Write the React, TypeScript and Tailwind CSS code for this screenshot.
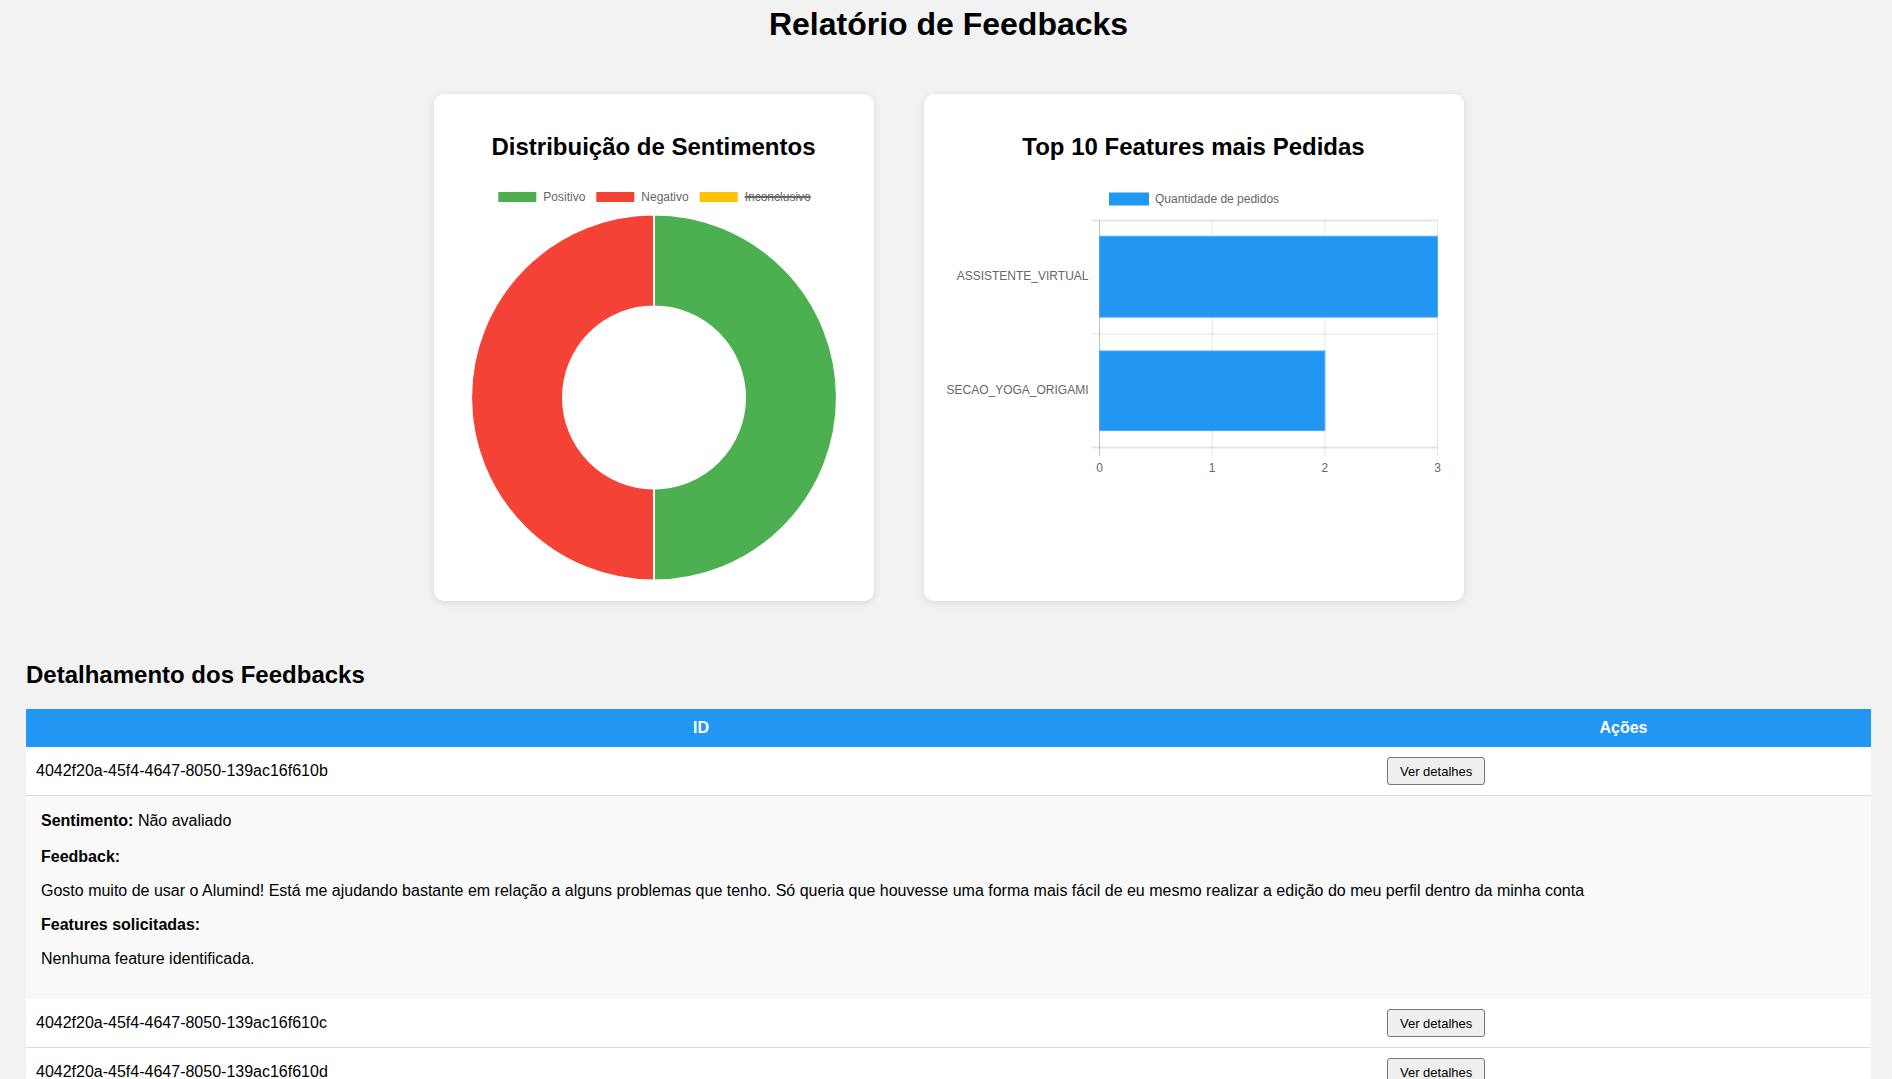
import React from "react";

const FONT = "Liberation Sans, Arial, Helvetica, sans-serif";

function DonutChart() {
  const cx = 200;
  const cy = 216.5;
  const R = 183;
  const r = 91;
  const green = `M ${cx} ${cy - R} A ${R} ${R} 0 0 1 ${cx} ${cy + R} L ${cx} ${cy + r} A ${r} ${r} 0 0 0 ${cx} ${cy - r} Z`;
  const red = `M ${cx} ${cy + R} A ${R} ${R} 0 0 1 ${cx} ${cy - R} L ${cx} ${cy - r} A ${r} ${r} 0 0 0 ${cx} ${cy + r} Z`;
  const items = [
    { x: 43.3, color: "#4CAF50", label: "Positivo", w: 42, strike: false },
    { x: 141.3, color: "#F44336", label: "Negativo", w: 47.4, strike: false },
    { x: 244.7, color: "#FFC107", label: "Inconclusivo", w: 66, strike: true },
  ];
  return (
    <svg width="400" height="400" viewBox="0 0 400 400" className="block">
      {items.map((it) => (
        <g key={it.label}>
          <rect x={it.x} y={10} width={40} height={12} fill={it.color} stroke="#fff" strokeWidth={2} />
          <text x={it.x + 46} y={20.3} fontSize={12} fill="#666" fontFamily={FONT}>
            {it.label}
          </text>
          {it.strike && (
            <line x1={it.x + 46} x2={it.x + 46 + it.w} y1={16} y2={16} stroke="#666" strokeWidth={2} />
          )}
        </g>
      ))}
      <path d={green} fill="#4CAF50" stroke="#fff" strokeWidth={2} />
      <path d={red} fill="#F44336" stroke="#fff" strokeWidth={2} />
    </svg>
  );
}

function BarChart() {
  const x0 = 155.5;
  const step = 112.67;
  const xs = [0, 1, 2, 3].map((v) => x0 + v * step);
  const top = 39.6;
  const bottom = 266.4;
  const mid = (top + bottom) / 2;
  const grid = "rgba(0,0,0,0.1)";
  return (
    <svg width="500" height="300" viewBox="0 0 500 300" className="block">
      <rect x={165} y={11.5} width={40} height={13} fill="#2196F3" />
      <text x={211} y={22.3} fontSize={12} fill="#666" fontFamily={FONT}>
        Quantidade de pedidos
      </text>
      {xs.map((x, i) => (
        <line
          key={i}
          x1={x}
          x2={x}
          y1={top}
          y2={bottom + 8}
          stroke={i === 0 ? "rgba(0,0,0,0.25)" : grid}
          strokeWidth={1}
        />
      ))}
      {[top, mid, bottom].map((y, i) => (
        <line key={i} x1={x0 - 8} x2={xs[3]} y1={y} y2={y} stroke={grid} strokeWidth={i === 1 ? 1 : 2} />
      ))}
      <rect x={x0} y={55.3} width={xs[3] - x0} height={80.8} fill="#2196F3" stroke="#4aa8f5" strokeWidth={1} />
      <rect x={x0} y={170} width={xs[2] - x0} height={79.6} fill="#2196F3" stroke="#4aa8f5" strokeWidth={1} />
      <text x={144.5} y={99.3} fontSize={12} fill="#666" textAnchor="end" fontFamily={FONT}>
        ASSISTENTE_VIRTUAL
      </text>
      <text x={144.5} y={212.8} fontSize={12} fill="#666" textAnchor="end" fontFamily={FONT}>
        SECAO_YOGA_ORIGAMI
      </text>
      {xs.map((x, i) => (
        <text key={i} x={x} y={291} fontSize={12} fill="#666" textAnchor="middle" fontFamily={FONT}>
          {i}
        </text>
      ))}
    </svg>
  );
}

function Btn() {
  return (
    <button className="ml-[1px] h-[28px] px-[12px] text-[13px] leading-[15px] text-black bg-[#efefef] border border-[#767676] rounded-[3px]">
      Ver detalhes
    </button>
  );
}

function Row({ id }: { id: string }) {
  return (
    <tr className="bg-white">
      <td className="px-[10px] py-[10px] border-b border-[#ddd] text-[16px] leading-[18px] align-middle">{id}</td>
      <td className="px-[10px] py-[10px] border-b border-[#ddd] align-middle">
        <Btn />
      </td>
    </tr>
  );
}

export default function App() {
  return (
    <div className="min-h-screen bg-[#f2f2f2] text-black font-['Liberation_Sans',Arial,sans-serif] pl-[26px] pr-[21px]">
      <h1 className="text-center text-[32px] leading-[37px] font-bold pt-[6px]">Relatório de Feedbacks</h1>

      <div className="flex justify-center gap-[50px] mt-[51px]">
        <div className="w-[440px] bg-white rounded-[10px] shadow-[0_2px_8px_rgba(0,0,0,0.1)] p-[20px]">
          <h2 className="text-center text-[24px] leading-[28px] font-bold mt-[19px] mb-[20px]">
            Distribuição de Sentimentos
          </h2>
          <DonutChart />
        </div>
        <div className="w-[540px] bg-white rounded-[10px] shadow-[0_2px_8px_rgba(0,0,0,0.1)] p-[20px]">
          <h2 className="text-center text-[24px] leading-[28px] font-bold mt-[19px] mb-[20px]">
            Top 10 Features mais Pedidas
          </h2>
          <BarChart />
        </div>
      </div>

      <h2 className="text-[24px] leading-[28px] font-bold mt-[60px] mb-[20px]">Detalhamento dos Feedbacks</h2>

      <table className="w-full table-fixed border-collapse">
        <colgroup>
          <col className="w-[1350px]" />
          <col />
        </colgroup>
        <thead>
          <tr className="bg-[#2196F3] text-white">
            <th className="px-[10px] py-[10px] text-[16px] leading-[18px] font-bold text-center">ID</th>
            <th className="px-[10px] py-[10px] text-[16px] leading-[18px] font-bold text-center">Ações</th>
          </tr>
        </thead>
        <tbody>
          <Row id="4042f20a-45f4-4647-8050-139ac16f610b" />
          <tr className="bg-[#f9f9f9]">
            <td colSpan={2} className="px-[15px] pt-[16px] pb-[15px] text-[16px] leading-[18px]">
              <p>
                <strong>Sentimento:</strong> Não avaliado
              </p>
              <p className="mt-[18px]">
                <strong>Feedback:</strong>
              </p>
              <p className="mt-[16px]">
                Gosto muito de usar o Alumind! Está me ajudando bastante em relação a alguns problemas que tenho. Só
                queria que houvesse uma forma mais fácil de eu mesmo realizar a edição do meu perfil dentro da minha conta
              </p>
              <p className="mt-[16px]">
                <strong>Features solicitadas:</strong>
              </p>
              <p className="mt-[16px] mb-[16px]">Nenhuma feature identificada.</p>
            </td>
          </tr>
          <Row id="4042f20a-45f4-4647-8050-139ac16f610c" />
          <Row id="4042f20a-45f4-4647-8050-139ac16f610d" />
        </tbody>
      </table>
    </div>
  );
}
